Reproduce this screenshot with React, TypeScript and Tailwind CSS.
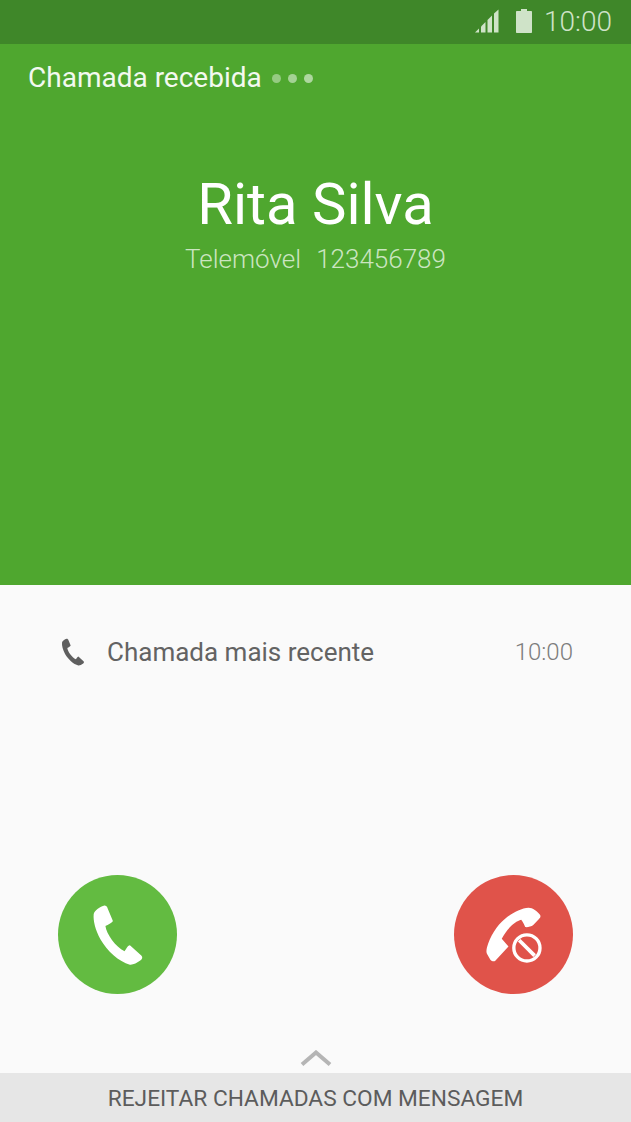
const HANDSET = "M130 130 C132 120 148 108 160 105 C166 104 170 108 172 114 L187 150 C188 155 172 162 165 166 C168 190 195 228 222 241 C226 236 231 224 238 223 L272 254 C277 259 275 265 270 268 C258 276 248 282 238 281 C205 272 170 240 150 205 C135 178 128 150 130 130 Z";

function SignalIcon() {
  return (
    <svg width="24" height="24" viewBox="0 0 24 24" fill="#cfe3c8">
      <path d="M23.5 0.5V23.5H19V4.5Z" />
      <path d="M17 6.5V23.5H12.5V11Z" />
      <path d="M10.5 13V23.5H6V17.5Z" />
      <path d="M4 19.5V23.5H0Z" />
    </svg>
  );
}

function BatteryIcon() {
  return (
    <svg width="16" height="24" viewBox="0 0 16 24" fill="#cfe3c8">
      <path d="M5 0H11V2H15C15.6 2 16 2.4 16 3V23C16 23.6 15.6 24 15 24H1C0.4 24 0 23.6 0 23V3C0 2.4 0.4 2 1 2H5Z" />
    </svg>
  );
}

function Handset({ className, color }: { className: string; color: string }) {
  return (
    <svg className={className} viewBox="125 100 155 185" fill={color}>
      <path d={HANDSET} />
    </svg>
  );
}

function RejectIcon() {
  return (
    <svg className="w-[57px] h-[57px]" viewBox="120 107 170 170" fill="none">
      <path
        d="M250 112 C262 112 276 122 284 133 C287 138 285 142 281 146 L264 164 C258 169 246 171 240 170 C238 164 233 154 228 148 C210 152 184 176 170 205 L190 228 L150 271 C145 273 140 271 136 267 L127 252 C123 246 124 238 126 230 C134 200 155 165 180 145 C200 128 228 113 250 112 Z"
        fill="#ffffff"
      />
      <circle cx="245" cy="232" r="50" fill="#e0534a" />
      <circle cx="245" cy="232" r="39" stroke="#ffffff" strokeWidth="10" />
      <path d="M222 209 L268 255" stroke="#ffffff" strokeWidth="11" />
    </svg>
  );
}

export default function App() {
  return (
    <div className="w-[631px] h-[1122px] flex flex-col bg-[#fafafa] overflow-hidden font-['Roboto',sans-serif]">
      {/* Status bar */}
      <div className="h-[44px] bg-[#3f8729] flex items-center justify-end pr-[19px]">
        <div className="flex items-center gap-[17px] -mt-[2px] -ml-[1px]">
          <SignalIcon />
          <BatteryIcon />
        </div>
        <span className="ml-[12px] text-[28px] font-light text-[#cfe3c8] leading-none">10:00</span>
      </div>

      {/* Caller */}
      <div className="h-[541px] bg-[#4fa72f] flex flex-col">
        <div className="flex items-center pl-[28px] pt-[19px] h-[49px]">
          <span className="text-[28px] leading-[30px] text-[#f3f9f0]">Chamada recebida</span>
          <div className="flex items-center gap-[7px] ml-[10px]">
            <span className="w-[9px] h-[9px] rounded-full bg-[#96cb82]" />
            <span className="w-[9px] h-[9px] rounded-full bg-[#a4d294]" />
            <span className="w-[9px] h-[9px] rounded-full bg-[#aed79f]" />
          </div>
        </div>
        <div className="mt-[78px] text-center text-[58px] leading-[66px] text-white">Rita Silva</div>
        <div className="mt-[7px] text-center text-[26px] leading-[30px] font-light text-[#cbe5c1] flex justify-center gap-[15px]">
          <span>Telemóvel</span>
          <span>123456789</span>
        </div>
      </div>

      {/* Recent call */}
      <div className="flex items-center justify-between mt-[50px] h-[34px] pl-[61px] pr-[58px]">
        <div className="flex items-center gap-[22px]">
          <Handset className="w-[24px] h-[28px]" color="#5f5f5f" />
          <span className="text-[26px] text-[#636363]">Chamada mais recente</span>
        </div>
        <span className="text-[24px] font-light text-[#7d7d7d]">10:00</span>
      </div>

      {/* Answer / reject */}
      <div className="flex justify-between mt-[206px] px-[58px]">
        <button className="w-[119px] h-[119px] rounded-full bg-[#63bb41] flex items-center justify-center">
          <Handset className="w-[52px] h-[62px]" color="#ffffff" />
        </button>
        <button className="w-[119px] h-[119px] rounded-full bg-[#e0534a] flex items-center justify-center">
          <RejectIcon />
        </button>
      </div>

      {/* Reject with message */}
      <div className="mt-auto flex flex-col items-center">
        <svg width="32" height="16" viewBox="0 0 32 16" fill="none" className="mb-[7px]">
          <path d="M2 14.5 L16 2.5 L30 14.5" stroke="#b5b5b5" strokeWidth="4" />
        </svg>
        <div className="w-full h-[49px] bg-[#e6e6e6] flex items-center justify-center pt-[3px] text-[22.7px] text-[#5c5c5c]">
          REJEITAR CHAMADAS COM MENSAGEM
        </div>
      </div>
    </div>
  );
}
